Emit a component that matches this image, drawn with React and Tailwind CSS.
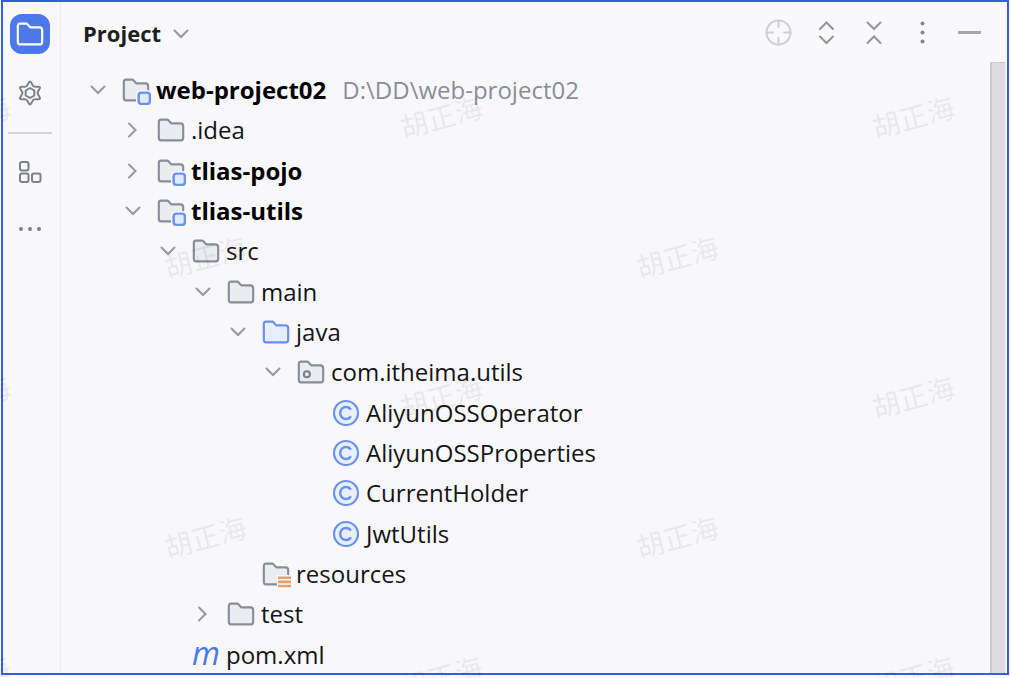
import React, { useState } from 'react'

const FOLDER = 'M8.1 4.35L8.25 4.5H13C13.83 4.5 14.5 5.17 14.5 6V12.13C14.5 12.95 13.93 13.5 13.37 13.5H2.63C2.07 13.5 1.5 12.95 1.5 12.13V3.87C1.5 3.05 2.07 2.5 2.63 2.5H6.12C6.26 2.5 6.39 2.56 6.48 2.65Z'

const TREE = [
  { name: 'web-project02', depth: 0, icon: 'module', open: true, bold: true, path: 'D:\\DD\\web-project02' },
  { name: '.idea', depth: 1, icon: 'folder', open: false },
  { name: 'tlias-pojo', depth: 1, icon: 'module', open: false, bold: true },
  { name: 'tlias-utils', depth: 1, icon: 'module', open: true, bold: true },
  { name: 'src', depth: 2, icon: 'folder', open: true },
  { name: 'main', depth: 3, icon: 'folder', open: true },
  { name: 'java', depth: 4, icon: 'source', open: true },
  { name: 'com.itheima.utils', depth: 5, icon: 'package', open: true },
  { name: 'AliyunOSSOperator', depth: 6, icon: 'class' },
  { name: 'AliyunOSSProperties', depth: 6, icon: 'class' },
  { name: 'CurrentHolder', depth: 6, icon: 'class' },
  { name: 'JwtUtils', depth: 6, icon: 'class' },
  { name: 'resources', depth: 4, icon: 'resources' },
  { name: 'test', depth: 3, icon: 'folder', open: false },
  { name: 'pom.xml', depth: 2, icon: 'maven' },
]

// Centres of the watermark stamps
const MARKS = [
  [-31, 116], [441, 116], [913, 116],
  [205, 256], [677, 256],
  [-31, 396], [441, 396], [913, 396],
  [205, 536], [677, 536],
  [-31, 676], [441, 676], [913, 676],
]

function Icon({ size = 30, children }) {
  return (
    <svg width={size} height={size} viewBox="0 0 16 16" fill="none" strokeWidth="1.15" className="shrink-0" aria-hidden="true">
      {children}
    </svg>
  )
}

function Chevron({ open }) {
  return (
    <svg width="20" height="20" viewBox="0 0 20 20" fill="none" stroke="#9598a3" strokeWidth="2" strokeLinecap="round" aria-hidden="true">
      <path d={open ? 'M3.5 6.5L10 13L16.5 6.5' : 'M6 3.5L12.5 10L6 16.5'} />
    </svg>
  )
}

function NodeIcon({ type }) {
  if (type === 'maven') {
    return <span className="w-[30px] shrink-0 pb-1 text-center text-[32px] leading-8 font-medium italic text-[#4c78ee]">m</span>
  }
  if (type === 'class') {
    return (
      <Icon>
        <circle cx="8" cy="8" r="6.4" fill="#e7effd" stroke="#6b90f2" />
        <path d="M10.6 6.2C10 5.3 9.1 4.8 8.1 4.8C6.3 4.8 4.9 6.2 4.9 8C4.9 9.8 6.3 11.2 8.1 11.2C9.1 11.2 10 10.7 10.6 9.8" stroke="#6b90f2" strokeWidth="1.3" />
      </Icon>
    )
  }
  if (type === 'source') {
    return <Icon><path d={FOLDER} fill="#e7effd" stroke="#6b90f2" /></Icon>
  }
  return (
    <Icon>
      <path d={FOLDER} fill="#ebecf0" stroke="#8a8d98" />
      {type === 'package' && <circle cx="5.8" cy="9.2" r="1.6" stroke="#7d808b" />}
      {type === 'module' && (
        <>
          <rect x="8" y="8" width="8" height="8" rx="2" fill="#f8f8fb" />
          <rect x="9.4" y="9.4" width="6" height="6" rx="1.5" fill="#e1eafd" stroke="#6b90f2" strokeWidth="1.3" />
        </>
      )}
      {type === 'resources' && (
        <>
          <rect x="8.5" y="8.5" width="7.5" height="7.5" fill="#f8f8fb" />
          <path d="M9 10H16M9 12.2H16M9 14.4H16" stroke="#e3a06c" strokeWidth="1.4" />
        </>
      )}
    </Icon>
  )
}

function Sidebar() {
  return (
    <nav className="flex w-[58px] shrink-0 flex-col items-center border-r border-[#ebecf0] pt-3 pr-[3px]">
      <button aria-label="Project" className="flex size-10 items-center justify-center rounded-xl bg-[#4c78ea]">
        <Icon><path d={FOLDER} stroke="#fff" /></Icon>
      </button>
      <button aria-label="Settings" className="mt-6 flex h-[30px] w-10 items-center justify-center">
        <svg width="28" height="28" viewBox="0 0 28 28" fill="none" stroke="#7d808b" strokeWidth="2" strokeLinejoin="round" aria-hidden="true">
          <path d="M14 2.5C15.5 2.5 16.2 6.6 17.8 7.5C19.4 8.4 23.2 6.9 24 8.2C24.7 9.5 21.6 12.1 21.6 14C21.6 15.9 24.7 18.5 24 19.8C23.2 21.1 19.4 19.6 17.8 20.5C16.2 21.4 15.5 25.5 14 25.5C12.5 25.5 11.8 21.4 10.2 20.5C8.6 19.6 4.8 21.1 4 19.8C3.3 18.5 6.4 15.9 6.4 14C6.4 12.1 3.3 9.5 4 8.2C4.8 6.9 8.6 8.4 10.2 7.5C11.8 6.6 12.5 2.5 14 2.5Z" />
          <path d="M14 9L18.3 11.5V16.5L14 19L9.7 16.5V11.5Z" />
        </svg>
      </button>
      <hr className="mt-6 w-11 border-t-2 border-[#d3d5db]" />
      <button aria-label="Structure" className="mt-6 flex h-7 w-10 items-center justify-center">
        <svg width="24" height="24" viewBox="0 0 24 24" fill="none" stroke="#7d808b" strokeWidth="2" aria-hidden="true">
          <rect x="2" y="2" width="8.5" height="8.5" rx="2" />
          <rect x="2" y="13.5" width="8.5" height="8.5" rx="2" />
          <rect x="14" y="13.5" width="8.5" height="8.5" rx="2" />
        </svg>
      </button>
      <button aria-label="More" className="mt-7 flex h-[30px] w-10 items-center justify-center">
        <svg width="24" height="6" viewBox="0 0 24 6" fill="#7d808b" aria-hidden="true">
          <circle cx="3" cy="3" r="2" />
          <circle cx="12" cy="3" r="2" />
          <circle cx="21" cy="3" r="2" />
        </svg>
      </button>
    </nav>
  )
}

function ToolButton({ label, children }) {
  return (
    <button aria-label={label} className="size-[30px]">
      <svg width="30" height="30" viewBox="0 0 30 30" fill="none" stroke="#9295a1" strokeWidth="2" strokeLinecap="round" aria-hidden="true">
        {children}
      </svg>
    </button>
  )
}

function Header() {
  return (
    <header className="flex h-[60px] items-center bg-[#f9f9fb] pt-1 pr-[23px] pl-[22px]">
      <button className="flex items-center gap-2.5 text-[22px] font-bold text-[#1f1f22]">
        Project
        <Chevron open />
      </button>
      <div className="ml-auto flex gap-[18px]">
        <ToolButton label="Select opened file">
          <g stroke="#cfcfd1">
            <circle cx="16.5" cy="13.5" r="12" />
            <path d="M16.5 1.5V8M16.5 19V25.5M4.5 13.5H11M22 13.5H28.5" />
          </g>
        </ToolButton>
        <ToolButton label="Expand all">
          <path d="M10 10L16.5 3.5L23 10M10 17.5L16.5 24L23 17.5" />
        </ToolButton>
        <ToolButton label="Collapse all">
          <path d="M9.5 3.5L16 10L22.5 3.5M9.5 24L16 17.5L22.5 24" />
        </ToolButton>
        <ToolButton label="Options">
          <g fill="#83868f" stroke="none">
            <circle cx="16.5" cy="4.5" r="2" />
            <circle cx="16.5" cy="13.5" r="2" />
            <circle cx="16.5" cy="22.5" r="2" />
          </g>
        </ToolButton>
        <ToolButton label="Hide">
          <path d="M4 13.5H27" stroke="#a5a8b3" strokeWidth="3" strokeLinecap="butt" />
        </ToolButton>
      </div>
    </header>
  )
}

function TreeRow({ node, onToggle }) {
  return (
    <li className="flex min-h-0 items-center leading-8 whitespace-nowrap" style={{ paddingLeft: 27 + node.depth * 35 }}>
      <span className="mr-[13px] flex w-5 shrink-0">
        {node.open !== undefined && (
          <button aria-label={`Toggle ${node.name}`} onClick={onToggle}>
            <Chevron open={node.open} />
          </button>
        )}
      </span>
      <NodeIcon type={node.icon} />
      <span className={node.bold ? 'ml-[5px] font-bold text-black' : 'ml-[5px] text-[#141416]'}>{node.name}</span>
      {node.path && <span className="ml-4 text-[#8b8e9a]">{node.path}</span>}
    </li>
  )
}

export default function App() {
  const [nodes, setNodes] = useState(TREE)

  function toggle(i) {
    setNodes(list => list.map((n, k) => (k === i ? { ...n, open: !n.open } : n)))
  }

  return (
    <div className="relative flex min-h-screen overflow-hidden bg-white px-px pb-[3px] font-['Open_Sans',sans-serif] text-2xl">
      <div className="flex flex-1 overflow-hidden border-2 border-[#345ce6] bg-[#f8f8fb]">
        <Sidebar />
        <main className="flex min-w-0 flex-1 flex-col">
          <Header />
          <div className="flex flex-1">
            <ul className="-mb-0.5 grid flex-1 auto-rows-fr pt-2">
              {nodes.map((n, i) => <TreeRow key={n.name} node={n} onToggle={() => toggle(i)} />)}
            </ul>
            <div className="mr-0.5 w-[15px] border-t border-l-2 border-[#c9c9cb] bg-[#dcdcde]" />
          </div>
        </main>
      </div>

      <div className="pointer-events-none absolute inset-0 overflow-hidden" aria-hidden="true">
        {MARKS.map(([x, y]) => (
          <span
            key={`${x}-${y}`}
            className="absolute -translate-x-1/2 -translate-y-1/2 -rotate-15 font-['Noto_Sans_CJK_SC',sans-serif] text-[28px] leading-none font-medium whitespace-nowrap text-black/6"
            style={{ left: x, top: y }}
          >
            胡正海
          </span>
        ))}
      </div>
    </div>
  )
}
